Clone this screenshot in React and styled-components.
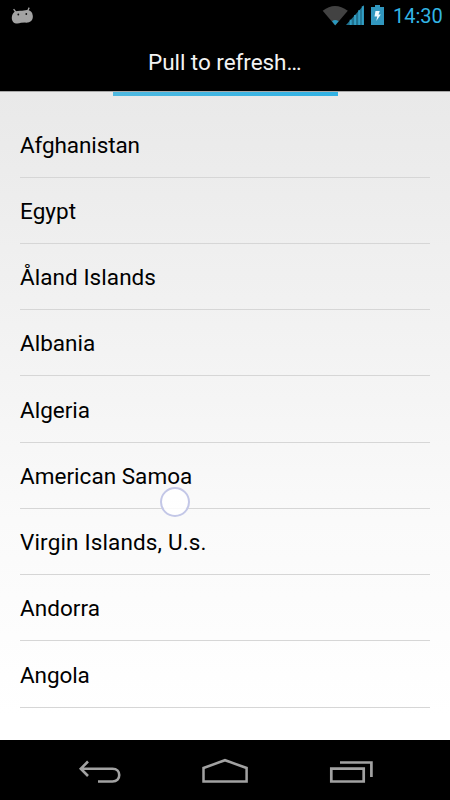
import React from "react";
import styled, { createGlobalStyle } from "styled-components";

const GlobalStyle = createGlobalStyle`
  * { box-sizing: border-box; }
  body { margin: 0; background: #000; font-family: Roboto, "Noto Sans", sans-serif; }
`;

const Screen = styled.div`
  width: 450px;
  height: 800px;
  display: flex;
  flex-direction: column;
  overflow: hidden;
  background: #000;
`;

const StatusBar = styled.header`
  height: 31px;
  flex: none;
  display: flex;
  justify-content: space-between;
  padding: 0 7px 0 10px;
`;

const StatusIcons = styled.div`
  display: flex;
`;

const Clock = styled.time`
  width: 50px;
  margin-left: 8px;
  color: #33b5e5;
  font-size: 20px;
  line-height: 32px;
  white-space: nowrap;
`;

const ActionBar = styled.div`
  height: 60px;
  flex: none;
  padding-left: 148px;
  color: #f3f3f3;
  font-size: 22.5px;
  line-height: 62px;
  letter-spacing: -0.05px;
  white-space: nowrap;
`;

const Content = styled.main`
  position: relative;
  flex: 1;
  padding: 19.25px 20px 0;
  background: linear-gradient(#e9e9e9, #f3f3f3 40%, #fafafa 66%, #fff 96%);
  border-top: 1px solid #a8a8a8;
`;

const PullProgress = styled.div`
  position: absolute;
  top: 0;
  left: 112.5px;
  width: 225px;
  height: 4px;
  background: linear-gradient(90deg, #4fb9e0, #31b2e4);
`;

const CountryList = styled.ul`
  margin: 0;
  padding: 0;
  list-style: none;
  display: grid;
  grid-auto-rows: 66.25px;
`;

const Country = styled.li`
  padding-top: 1.25px;
  border-bottom: 1px solid #d6d6d6;
  color: #000;
  font-size: 22.5px;
  line-height: 64px;
  letter-spacing: ${(p) => p.$tracking}px;
  white-space: nowrap;
`;

const TouchPoint = styled.div`
  position: absolute;
  left: 160px;
  top: 395px;
  width: 30px;
  height: 30px;
  border: 2px solid #c3c7e7;
  border-radius: 50%;
  background: rgba(255, 255, 255, 0.85);
`;

const NavBar = styled.nav`
  height: 60px;
  flex: none;
  display: flex;
  justify-content: center;
`;

const NavButton = styled.button`
  width: 126px;
  height: 60px;
  padding: 0;
  border: 0;
  background: none;
  svg { display: block; }
`;

const countries = [
  ["Afghanistan", -0.1],
  ["Egypt", 0.05],
  ["Åland Islands", 0.06],
  ["Albania", 0],
  ["Algeria", 0],
  ["American Samoa", 0.03],
  ["Virgin Islands, U.s.", 0.15],
  ["Andorra", 0.05],
  ["Angola", -0.1],
];

function DebugIcon() {
  return (
    <svg width="25" height="31" viewBox="10 0 25 31">
      <path d="M13.6 9.2L15.8 12M29.2 7.6L27.6 11" fill="none" stroke="#a3a3a3" strokeWidth="1.3" />
      <path d="M15.5 11.2Q19 10.4 22 10.8L27 9.9Q31 10.2 32.2 13.2Q33.8 18 31.2 21Q29 23 25 22.6L21 22.8Q17.5 24.3 14.3 23Q11.5 21.2 11.8 17Q12.4 12.8 15.5 11.2Z" fill="#a3a3a3" />
      <circle cx="18.3" cy="14.5" r="0.9" fill="#111" />
      <circle cx="26.3" cy="14" r="0.9" fill="#111" />
    </svg>
  );
}

function SystemIcons() {
  return (
    <svg width="64" height="31" viewBox="321 0 64 31">
      <path d="M322.7 10.8Q334.9 1.2 347.8 10.8L335.2 25.4Z" fill="#424242" />
      <path d="M332 21.2Q335 18.7 338.6 21.2L335.2 25.3Z" fill="#2998be" />
      <path d="M346 25L364 5V25Z" fill="#20708d" />
      <path d="M350.7 19.8V25M355.1 15V25M359.2 10.3V25M362.8 6.3V25" stroke="#329fc5" strokeWidth="2" />
      <path d="M371 7H375V5H380V7H384V25H371Z" fill="#3197bf" />
      <path d="M375.5 11H379.8L378.5 14.5H380.8L376.3 21L377.2 16.5H374.5Z" fill="#eefaff" />
    </svg>
  );
}

function BackIcon() {
  return (
    <svg width="126" height="60" viewBox="36 740 126 60" fill="none" stroke="#a2a2a2" strokeWidth="2.6">
      <path d="M88 761.5L80.8 768.7L88 776M81 768.7H112.5C121.5 768.7 121.5 781.5 112.5 781.5H98" />
    </svg>
  );
}

function HomeIcon() {
  return (
    <svg width="126" height="60" viewBox="162 740 126 60" fill="none" stroke="#a2a2a2" strokeWidth="2.5">
      <path d="M203.5 768L225 760.2L246.6 768V781.5H203.5Z" />
    </svg>
  );
}

function RecentIcon() {
  return (
    <svg width="126" height="60" viewBox="288 740 126 60" fill="none" stroke="#a2a2a2" strokeWidth="2.7">
      <path d="M331.3 768.6H363.7V781.5H331.3ZM340 762.5H371.4V777" />
    </svg>
  );
}

export default function App() {
  return (
    <Screen>
      <GlobalStyle />
      <StatusBar>
        <DebugIcon />
        <StatusIcons>
          <SystemIcons />
          <Clock>14:30</Clock>
        </StatusIcons>
      </StatusBar>
      <ActionBar>Pull to refresh…</ActionBar>
      <Content>
        <PullProgress />
        <CountryList>
          {countries.map(([name, tracking]) => (
            <Country key={name} $tracking={tracking}>{name}</Country>
          ))}
        </CountryList>
        <TouchPoint />
      </Content>
      <NavBar>
        <NavButton aria-label="Back"><BackIcon /></NavButton>
        <NavButton aria-label="Home"><HomeIcon /></NavButton>
        <NavButton aria-label="Recent apps"><RecentIcon /></NavButton>
      </NavBar>
    </Screen>
  );
}
